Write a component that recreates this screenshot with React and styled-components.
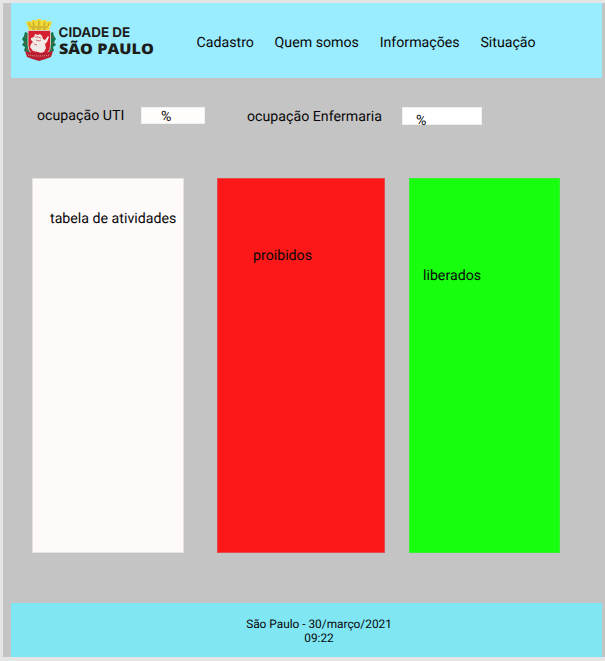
import React from "react";
import styled, { createGlobalStyle } from "styled-components";

const GlobalStyle = createGlobalStyle`
  *, *::before, *::after { box-sizing: border-box; }
  body {
    margin: 0;
    background: #e5e5e5;
    color: #080808;
    font-family: Roboto, "Liberation Sans", sans-serif;
    font-size: 14.2px;
    line-height: 18px;
    text-rendering: geometricPrecision;
    overflow: hidden;
  }
`;

const Page = styled.div`
  height: 661px;
  padding: 3px 0 4px 3px;
`;

const Frame = styled.div`
  display: flex;
  flex-direction: column;
  height: 654px;
  padding: 0 3px 0 8px;
  background: #c4c4c4;
`;

const Header = styled.header`
  display: flex;
  height: 75px;
  padding: 15px 0 0 10px;
  background: #9aecff;
`;

const Nav = styled.nav`
  display: flex;
  gap: 20.7px;
  margin: 16px 0 0 42.5px;
`;

const NavLink = styled.a`
  color: inherit;
  text-decoration: none;
  white-space: nowrap;
`;

const Stats = styled.section`
  display: flex;
  height: 71px;
  margin-top: 29px;
  padding-left: 26px;
`;

const StatLabel = styled.span`
  flex: none;
  width: ${(p) => p.$width}px;
  padding-top: ${(p) => p.$top}px;
  white-space: nowrap;
`;

const StatValue = styled.div`
  flex: none;
  width: ${(p) => p.$width}px;
  height: ${(p) => p.$height}px;
  margin-right: ${(p) => p.$gap || 0}px;
  padding: ${(p) => p.$pad};
  border: 1px solid #f0f0ef;
  background: ${(p) => p.$color};
`;

const Cards = styled.main`
  display: grid;
  grid-template-columns: 152px 168px 151px;
  column-gap: 33px;
  height: 375px;
  padding-left: 21px;
`;

const Card = styled.section`
  margin-left: ${(p) => p.$shift || 0}px;
  margin-right: ${(p) => -(p.$shift || 0)}px;
  padding: ${(p) => p.$pad};
  border: 1px solid ${(p) => p.$edge};
  background: ${(p) => p.$color};
  white-space: nowrap;
`;

const Footer = styled.footer`
  height: 54px;
  margin-top: auto;
  padding: 14px 0 0 25px;
  background: #80e6f4;
  font-size: 11.85px;
  line-height: 14px;
  text-align: center;
`;

const Brand = styled.div`
  display: flex;
  flex: none;
  width: 133px;
`;

const CrestSvg = styled.svg`
  display: block;
  flex: none;
`;

const BrandName = styled.div`
  padding: 8px 0 0 1.5px;
  color: #1d1d1b;
  white-space: nowrap;
`;

const BrandTop = styled.div`
  font: 650 13.4px/14px Inter, sans-serif;
`;

const BrandBottom = styled.div`
  margin-top: 2px;
  font: 800 14.6px/15px "Open Sans", sans-serif;
  transform: scaleX(1.11);
  transform-origin: left;
`;

function Crest() {
  return (
    <CrestSvg width="36" height="45" viewBox="0 0 36 45" role="img" aria-label="Brasão de São Paulo">
      <path
        d="M7 15 4 14 3 18 1 21l2 3-2 3 3 2-1 4 4 1 2 4 5-1V16zM29 15l3-1 1 4 2 3-2 3 2 3-3 2 1 4-4 1-2 4-5-1V16z"
        fill="#15784a"
      />
      <g fill="#b1413e">
        <circle cx="5" cy="19" r=".8" />
        <circle cx="4" cy="25" r=".8" />
        <circle cx="6" cy="31" r=".8" />
        <circle cx="31" cy="19" r=".8" />
        <circle cx="32" cy="25" r=".8" />
        <circle cx="30" cy="31" r=".8" />
      </g>
      <path d="m5 4 3-1 2 1 1-2 3 0 2 1 0-2h4l0 2 2-1 3 0 1 2 2-1 3 1-2 5-1 3.500H8L7 9z" fill="#f0d735" />
      <path d="m8 5 1 3m3-4 1 4m5-5v5m6-4-1 4m5-3-1 3M9 9h18M11 11h3m2 0h4m2 0h3" fill="none" stroke="#a78c2c" strokeWidth=".8" />
      <path d="M7 12.500h22.500v15q0 9-11.200 11.500Q7 36.500 7 27.500z" fill="#d31f30" stroke="#d9d4cf" strokeWidth=".9" />
      <path
        d="m10 20 3-1 1-3 3 1 2-1 2 2 1 3 2 1 3-4 1 1-2 5-2 2 1 4-2 4-3 1-3-1-5-1-3-4 1-3 2-2-2-2z"
        fill="#f1e9e5"
      />
      <path d="m14 19 3 0 3 1m-5 2 3 1 2-1m-7 4 3 1" fill="none" stroke="#c84c58" strokeWidth=".8" />
      <path d="M4 33q6 2 14 2t14-2l-2 6q-5 2-12 4-7-2-12-4z" fill="#b91e30" />
      <path d="M7 37q11 2 22 0" fill="none" stroke="#dfa5a5" strokeWidth=".9" strokeDasharray="1.2 .8" />
    </CrestSvg>
  );
}

export default function App() {
  return (
    <>
      <GlobalStyle />
      <Page>
        <Frame>
          <Header>
            <Brand>
              <Crest />
              <BrandName>
                <BrandTop>CIDADE DE</BrandTop>
                <BrandBottom>SÃO PAULO</BrandBottom>
              </BrandName>
            </Brand>
            <Nav>
              <NavLink>Cadastro</NavLink>
              <NavLink>Quem somos</NavLink>
              <NavLink>Informações</NavLink>
              <NavLink>Situação</NavLink>
            </Nav>
          </Header>
          <Stats>
            <StatLabel $width={104} $top={0}>ocupação UTI</StatLabel>
            <StatValue $width={64} $height={17} $gap={42} $pad="0 0 0 19px" $color="#fffdfc">%</StatValue>
            <StatLabel $width={155} $top={1}>ocupação Enfermaria</StatLabel>
            <StatValue $width={80} $height={18} $pad="4px 0 0 13px" $color="#ffffff">%</StatValue>
          </Stats>
          <Cards>
            <Card $pad="31px 0 0 17px" $color="#fffafa" $edge="#e8e1e1">tabela de atividades</Card>
            <Card $pad="68px 0 0 35px" $color="#fc1818" $edge="#e64949">proibidos</Card>
            <Card $shift={-9} $pad="88px 0 0 13px" $color="#17ff0f" $edge="#39f133">liberados</Card>
          </Cards>
          <Footer>
            São Paulo - 30/março/2021
            <br />
            09:22
          </Footer>
        </Frame>
      </Page>
    </>
  );
}
